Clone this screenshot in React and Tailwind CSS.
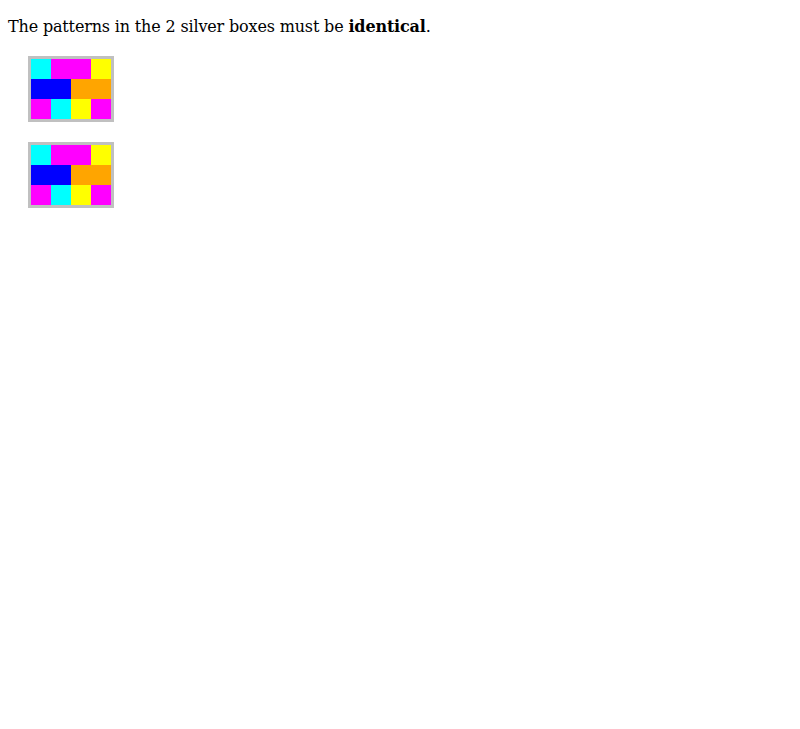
import React from "react";

function Box() {
  return (
    <div className="ml-5 w-[86px] border-[3px] border-[#c0c0c0] grid grid-cols-[repeat(4,20px)] grid-rows-[repeat(3,20px)]">
      <div className="bg-[#00ffff]" />
      <div className="bg-[#ff00ff] col-span-2" />
      <div className="bg-[#ffff00]" />
      <div className="bg-[#0000ff] col-span-2" />
      <div className="bg-[#ffa500] col-span-2" />
      <div className="bg-[#ff00ff]" />
      <div className="bg-[#00ffff]" />
      <div className="bg-[#ffff00]" />
      <div className="bg-[#ff00ff]" />
    </div>
  );
}

export default function App() {
  return (
    <div className="px-2 pt-[17px] bg-white min-h-[729px] text-black" style={{ fontFamily: '"DejaVu Serif", serif' }}>
      <p className="text-[16px] leading-[20px] tracking-[-0.16px]">
        The patterns in the 2 silver boxes must be <strong className="font-bold">identical</strong>.
      </p>
      <div className="mt-[19px] flex flex-col gap-5">
        <Box />
        <Box />
      </div>
    </div>
  );
}
